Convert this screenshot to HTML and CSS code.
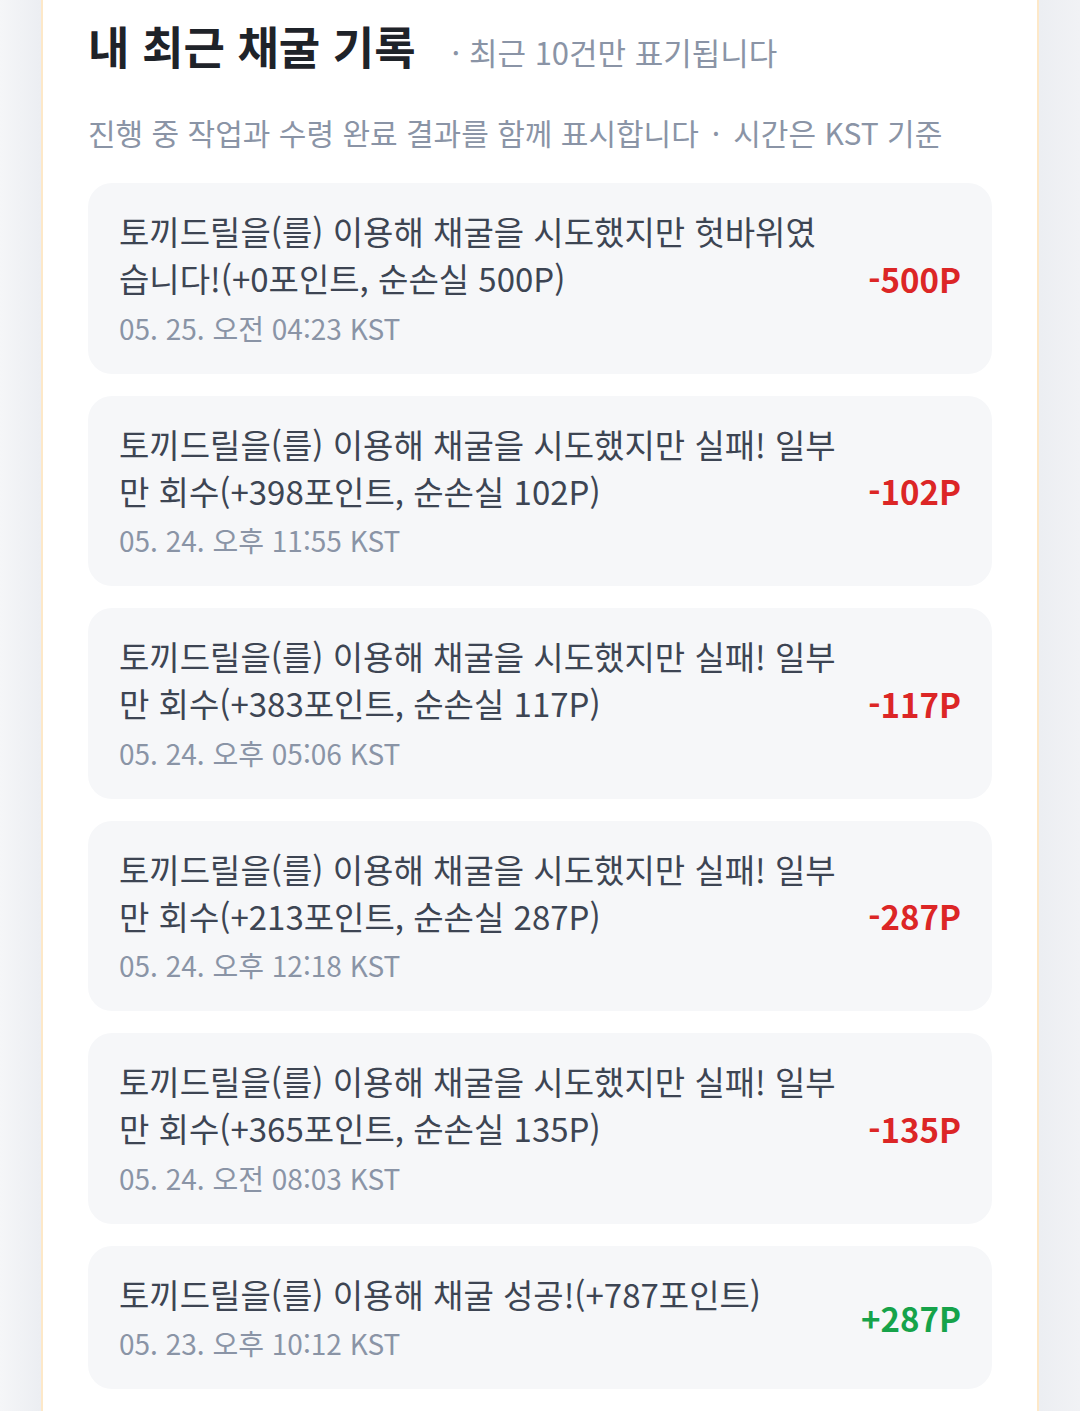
FILE: index.html
```html
<!DOCTYPE html>
<html lang="ko">
<head>
    <meta charset="UTF-8">
    <meta name="viewport" content="width=device-width, initial-scale=1.0">
    <title>내 최근 채굴 기록</title>
    <link rel="stylesheet" href="styles.css">
</head>
<body>

<div class="panel">
    <div class="panel-head">
        <h2>내 최근 채굴 기록</h2>
        <span class="note">· 최근 10건만 표기됩니다</span>
    </div>
    <p class="desc">진행 중 작업과 수령 완료 결과를 함께 표시합니다<span class="sep">·</span>시간은 KST 기준</p>

    <ul class="history">
        <li class="entry">
            <div class="entry-body">
                <p class="entry-text">토끼드릴을(를) 이용해 채굴을 시도했지만 헛바위였습니다!(+0포인트, 순손실 500P)</p>
                <p class="entry-time">05. 25. 오전 04:23 KST</p>
            </div>
            <span class="amount loss">-500P</span>
        </li>
        <li class="entry">
            <div class="entry-body">
                <p class="entry-text">토끼드릴을(를) 이용해 채굴을 시도했지만 실패! 일부만 회수(+398포인트, 순손실 102P)</p>
                <p class="entry-time">05. 24. 오후 11:55 KST</p>
            </div>
            <span class="amount loss">-102P</span>
        </li>
        <li class="entry">
            <div class="entry-body">
                <p class="entry-text">토끼드릴을(를) 이용해 채굴을 시도했지만 실패! 일부만 회수(+383포인트, 순손실 117P)</p>
                <p class="entry-time">05. 24. 오후 05:06 KST</p>
            </div>
            <span class="amount loss">-117P</span>
        </li>
        <li class="entry">
            <div class="entry-body">
                <p class="entry-text">토끼드릴을(를) 이용해 채굴을 시도했지만 실패! 일부만 회수(+213포인트, 순손실 287P)</p>
                <p class="entry-time">05. 24. 오후 12:18 KST</p>
            </div>
            <span class="amount loss">-287P</span>
        </li>
        <li class="entry">
            <div class="entry-body">
                <p class="entry-text">토끼드릴을(를) 이용해 채굴을 시도했지만 실패! 일부만 회수(+365포인트, 순손실 135P)</p>
                <p class="entry-time">05. 24. 오전 08:03 KST</p>
            </div>
            <span class="amount loss">-135P</span>
        </li>
        <li class="entry">
            <div class="entry-body">
                <p class="entry-text">토끼드릴을(를) 이용해 채굴 성공!(+787포인트)</p>
                <p class="entry-time">05. 23. 오후 10:12 KST</p>
            </div>
            <span class="amount gain">+287P</span>
        </li>
    </ul>
</div>

</body>
</html>
```

FILE: styles.css
```css
body {
    margin: 0;
    padding: 0;
    font-family: "Noto Sans CJK KR", "Noto Sans", sans-serif;
    background: linear-gradient(90deg, #f5f6f8 0, #eceef2 40px, #eceef2 1040px, #f1f2f5 1080px);
}
.panel {
    width: 998px;
    margin: 0 auto;
    box-sizing: border-box;
    background-color: #fff;
    border-left: 2px solid #fde8c8;
    border-right: 2px solid #fde8c8;
    padding: 16px 45px 40px;
}
.panel-head {
    display: flex;
    align-items: baseline;
}
.panel-head h2 {
    margin: 0;
    font-size: 45px;
    line-height: 60px;
    font-weight: 700;
    color: #1f2329;
}
.panel-head .note {
    margin-left: 36px;
    font-size: 31px;
    color: #8a94a6;
}
.desc {
    margin: 35px 0 30px;
    font-size: 30px;
    line-height: 42px;
    color: #8a94a6;
}
.desc .sep {
    margin: 0 13px;
}
.history {
    list-style: none;
    margin: 0;
    padding: 0;
    display: flex;
    flex-direction: column;
    gap: 22px;
}
.entry {
    display: flex;
    align-items: center;
    gap: 29px;
    background-color: #f6f7f9;
    border-radius: 24px;
    padding: 25px 31px 24px;
}
.entry-body {
    flex: 1;
}
.entry-text {
    margin: 0;
    font-size: 33px;
    line-height: 47px;
    color: #3d4553;
}
.entry-time {
    margin: 3.5px 0 0;
    font-size: 28px;
    line-height: 44px;
    color: #8a94a6;
}
.amount {
    flex-shrink: 0;
    min-width: 92px;
    text-align: right;
    font-size: 33px;
    font-weight: 700;
}
.amount.loss {
    color: #dc2626;
}
.amount.gain {
    color: #16a34a;
}
```
